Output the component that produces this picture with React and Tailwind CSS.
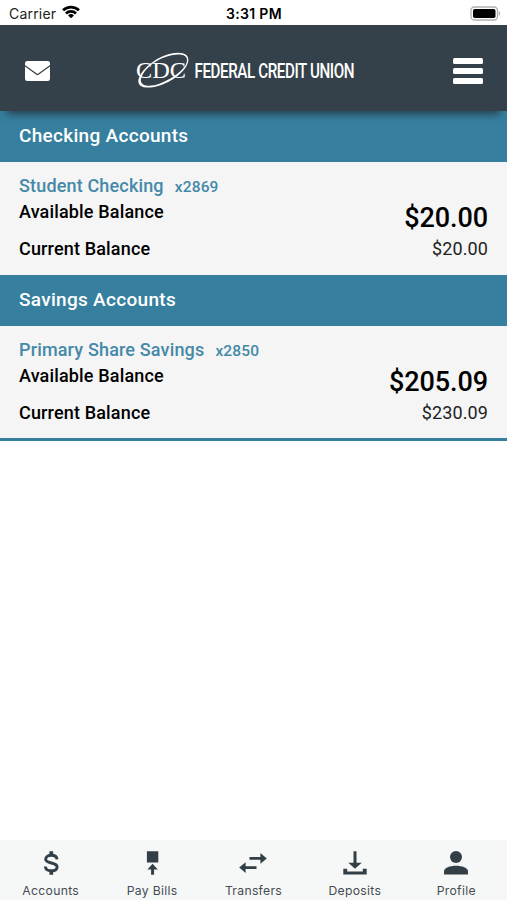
import React from 'react';

const ACCOUNT_GROUPS = [
  {
    title: 'Checking Accounts',
    accounts: [
      { id: 'x2869', name: 'Student Checking', available: '$20.00', current: '$20.00' },
    ],
  },
  {
    title: 'Savings Accounts',
    accounts: [
      { id: 'x2850', name: 'Primary Share Savings', available: '$205.09', current: '$230.09' },
    ],
  },
];

// Tab bar icons
const DollarIcon = () => (
  <svg className="w-6 h-6" viewBox="0 0 24 24" fill="none" stroke="currentColor" strokeWidth="2.9">
    <path d="M18 8.300C17.800 5.900 15.600 4.300 12.300 4.300S6.700 5.900 6.700 8.200c0 5 11.400 2.600 11.400 7.700 0 2.400-2.300 3.800-5.800 3.800s-5.800-1.600-6-4.200" />
    <path d="M12.300.3v4M12.300 19.700v4" strokeWidth="3.800" />
  </svg>
);

const PayBillsIcon = () => (
  <svg className="w-6 h-6" viewBox="0 0 24 24" fill="currentColor">
    <path d="M6.900.3h11.400v11.100H6.900zM12.600 12.800l5.200 5.700h-3.700v5.200h-3v-5.200H7.400z" />
  </svg>
);

const TransfersIcon = () => (
  <svg className="w-7 h-6" viewBox="0 0 28 24" fill="currentColor">
    <path d="M10.500 6.100h10.900V2l6.400 5.400-6.400 5.400V8.700H10.500zM17.500 15.300H6.600v-4.100L.2 16.600 6.600 22v-4.100h10.900z" />
  </svg>
);

const DepositsIcon = () => (
  <svg className="w-6 h-6" viewBox="0 0 24 24" fill="currentColor">
    <path d="M10.500.2h3v11.600h5.200L12 17.700l-6.700-5.900h5.200zM.3 17.800h3.900v2.700h15.600v-2.700h3.900v5.800H.3z" />
  </svg>
);

const ProfileIcon = () => (
  <svg className="w-6 h-6" viewBox="0 0 24 24" fill="currentColor">
    <circle cx="12" cy="6.1" r="6" />
    <path d="M0 23.600v-3.200c0-3.500 6-5.600 12-5.600s12 2.100 12 5.600v3.200z" />
  </svg>
);

const TABS = [
  { label: 'Accounts', Icon: DollarIcon },
  { label: 'Pay Bills', Icon: PayBillsIcon },
  { label: 'Transfers', Icon: TransfersIcon },
  { label: 'Deposits', Icon: DepositsIcon },
  { label: 'Profile', Icon: ProfileIcon },
];

const StatusBar = () => (
  <div className="h-[25px] shrink-0 grid grid-cols-3 items-center pl-[9px] pr-[6px] pt-[3px] font-['Inter',sans-serif] text-[14px] leading-none text-black">
    <div className="flex items-center gap-[6px]">
      <span className="tracking-[0.2px] text-[#222]">Carrier</span>
      <svg className="w-[18px] h-[14px] -mt-1" viewBox="0 0 19 14" fill="none" stroke="currentColor" strokeWidth="2.9">
        <path d="M1.1 5.2a12 12 0 0 1 16.800 0M4.200 8.500a7.500 7.500 0 0 1 10.600 0" />
        <path d="M9.500 13.700 6.400 10.600a4.400 4.400 0 0 1 6.200 0z" fill="currentColor" stroke="none" />
      </svg>
    </div>
    <div className="text-center font-semibold tracking-[0.3px] whitespace-nowrap -ml-[2px]">3:31 PM</div>
    <div className="flex justify-end">
      <svg className="w-[31px] h-[15px] -mt-0.5" viewBox="0 0 31 15">
        <rect x="1" y="1" width="26.500" height="13" rx="3.500" fill="none" stroke="#b0b0b0" strokeWidth="1.300" />
        <rect x="3" y="3" width="22.500" height="9" rx="1.800" fill="#000" />
        <path d="M28.800 5.200c1.800.5 1.800 4.100 0 4.600z" fill="#b0b0b0" />
      </svg>
    </div>
  </div>
);

const Logo = () => (
  <svg className="w-56 h-[41px] mr-[11px] overflow-visible" viewBox="0 0 224 41" fill="#fff">
    <text x="2" y="28" fontFamily="Liberation Serif, serif" fontSize="22.500" textLength="50" lengthAdjust="spacingAndGlyphs">CDC</text>
    <path
      transform="translate(2 .5)"
      fillRule="evenodd"
      d="M2.500 32C1 25 13 11 28 5.200C41 .2 54 1.300 52.200 11C50 21 36 31.500 22 35.500C12 38.300 3.500 37.500 2.500 32ZM5 31C6 36 15 36.500 24 33C38 27.500 50 18 51 10.500C51.800 2.500 40 2.500 28 7C14 12.500 4 24 5 31Z"
    />
    <g transform="translate(60.500 27.800) scale(.76 1)">
      <text fontFamily="Roboto, sans-serif" fontSize="20" fontWeight="500" textLength="210.500">FEDERAL CREDIT UNION</text>
    </g>
  </svg>
);

const Header = () => (
  <header className="relative z-10 h-[86px] shrink-0 flex items-center justify-between bg-[#35414a] pl-[25px] pr-6 pt-[5px] text-white shadow-[0_10px_8px_-7px_rgba(38,50,60,0.85)]">
    <svg className="w-[25px] h-5" viewBox="0 0 25 20" fill="currentColor">
      <path d="M2.300 0h20.400Q25 0 25 2.300V4L12.500 13 0 4V2.300Q0 0 2.300 0z" />
      <path d="M0 5.600 11.400 13.800q1.100.7 2.200 0L25 5.600V17.700Q25 20 22.700 20H2.300Q0 20 0 17.700z" />
    </svg>
    <Logo />
    <div className="flex flex-col gap-1">
      <span className="w-[30px] h-1.5 rounded-[1.5px] bg-white" />
      <span className="w-[30px] h-1.5 rounded-[1.5px] bg-white" />
      <span className="w-[30px] h-1.5 rounded-[1.5px] bg-white" />
    </div>
  </header>
);

const AccountRow = ({ account }) => (
  <div className="h-[112.5px] flex flex-col px-[19px] pt-[11px] text-[18px] tracking-[0.16px] font-medium">
    <div className="flex items-baseline gap-[11px] h-[27px] leading-[26px] text-[#4489a8]">
      <span>{account.name}</span>
      <span className="text-[15.5px]">{account.id}</span>
    </div>
    <div className="flex justify-between h-[37px]">
      <span className="leading-[24px]">Available Balance</span>
      <span className="text-[27px] leading-[37px] tracking-[-0.1px]">{account.available}</span>
    </div>
    <div className="flex justify-between leading-[24px]">
      <span>Current Balance</span>
      <span className="font-normal tracking-[0.1px] text-[#222]">{account.current}</span>
    </div>
  </div>
);

const AccountGroup = ({ group }) => (
  <section>
    <h2 className="h-[51px] flex items-center bg-[#367f9e] px-[19px] text-[19px] font-medium tracking-[0.3px] text-white">
      {group.title}
    </h2>
    {group.accounts.map((account) => (
      <AccountRow key={account.id} account={account} />
    ))}
  </section>
);

const TabBar = () => (
  <nav className="h-[60px] shrink-0 grid grid-cols-5 bg-[#f6f7f7] pt-[11px] text-[#323f47]">
    {TABS.map(({ label, Icon }) => (
      <button key={label} className="flex flex-col items-center">
        <Icon />
        <span className="mt-[8px] font-['Inter',sans-serif] text-[12.2px] leading-[16px] tracking-[0.3px] text-[#444c52]">
          {label}
        </span>
      </button>
    ))}
  </nav>
);

export default function App() {
  return (
    <div className="h-[900px] w-full flex flex-col overflow-hidden bg-white font-['Roboto',sans-serif] text-black">
      <StatusBar />
      <Header />
      <main className="flex-1">
        <div className="bg-[#f5f5f5] border-b-[3px] border-[#367f9e]">
          {ACCOUNT_GROUPS.map((group) => (
            <AccountGroup key={group.title} group={group} />
          ))}
        </div>
      </main>
      <TabBar />
    </div>
  );
}
